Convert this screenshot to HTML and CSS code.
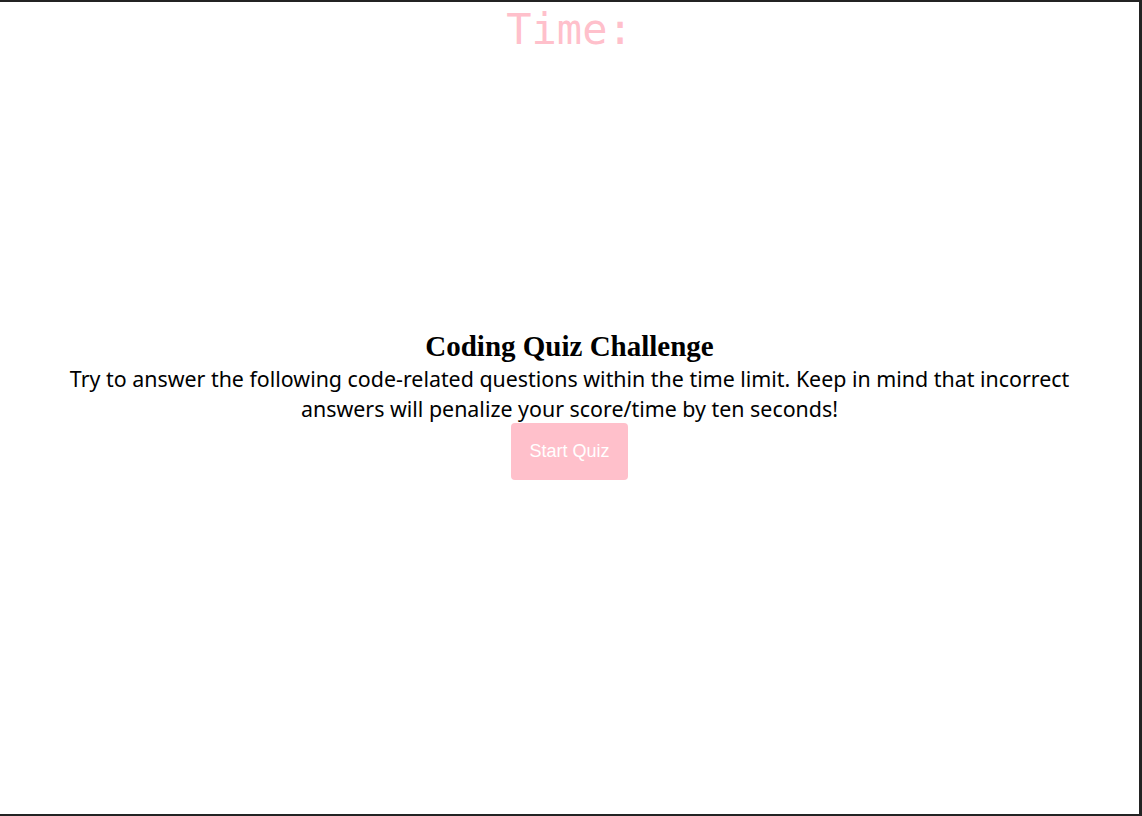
FILE: index.html
```html
<!DOCTYPE html>
<html lang="en">
<head>
<meta charset="utf-8">
<title>Coding Quiz</title>
<link rel="stylesheet" href="styles.css">
</head>
<body>
<div class="frame">
  <header class="timer">Time:</header>
  <main class="intro">
    <h2 class="title">Coding Quiz Challenge</h2>
    <p class="desc">Try to answer the following code-related questions within the time limit. Keep in mind that incorrect answers will penalize your score/time by ten seconds!</p>
    <button class="start">Start Quiz</button>
  </main>
</div>
</body>
</html>
```
FILE: styles.css
```css
html, body {
  margin: 0;
  padding: 0;
  height: 100%;
  background: #202020;
}
.frame {
  box-sizing: border-box;
  height: 816px;
  background: #fff;
  border-top: 2px solid #232323;
  border-right: 3px solid #232323;
  border-bottom: 2px solid #232323;
  display: flex;
  flex-direction: column;
  align-items: center;
}
.timer {
  font-family: "DejaVu Sans Mono", monospace;
  font-size: 42px;
  color: #ffc0cb;
  line-height: 56px;
  height: 56px;
}
.intro {
  flex: 1;
  display: flex;
  flex-direction: column;
  align-items: center;
  justify-content: center;
  text-align: center;
  padding: 0 60px 63px;
}
.title {
  font-family: "Liberation Serif", serif;
  font-weight: bold;
  font-size: 29px;
  margin: 0 0 2px;
  line-height: 32px;
  color: #000;
}
.desc {
  font-family: "Noto Sans", sans-serif;
  font-size: 21.4px;
  line-height: 30px;
  margin: 0 0 -1px;
  color: #000;
}
.start {
  font-family: "Liberation Sans", sans-serif;
  font-size: 18px;
  color: #fff;
  background: #ffc0cb;
  border: none;
  border-radius: 4px;
  width: 117px;
  height: 57px;
  padding: 0;
}
```
